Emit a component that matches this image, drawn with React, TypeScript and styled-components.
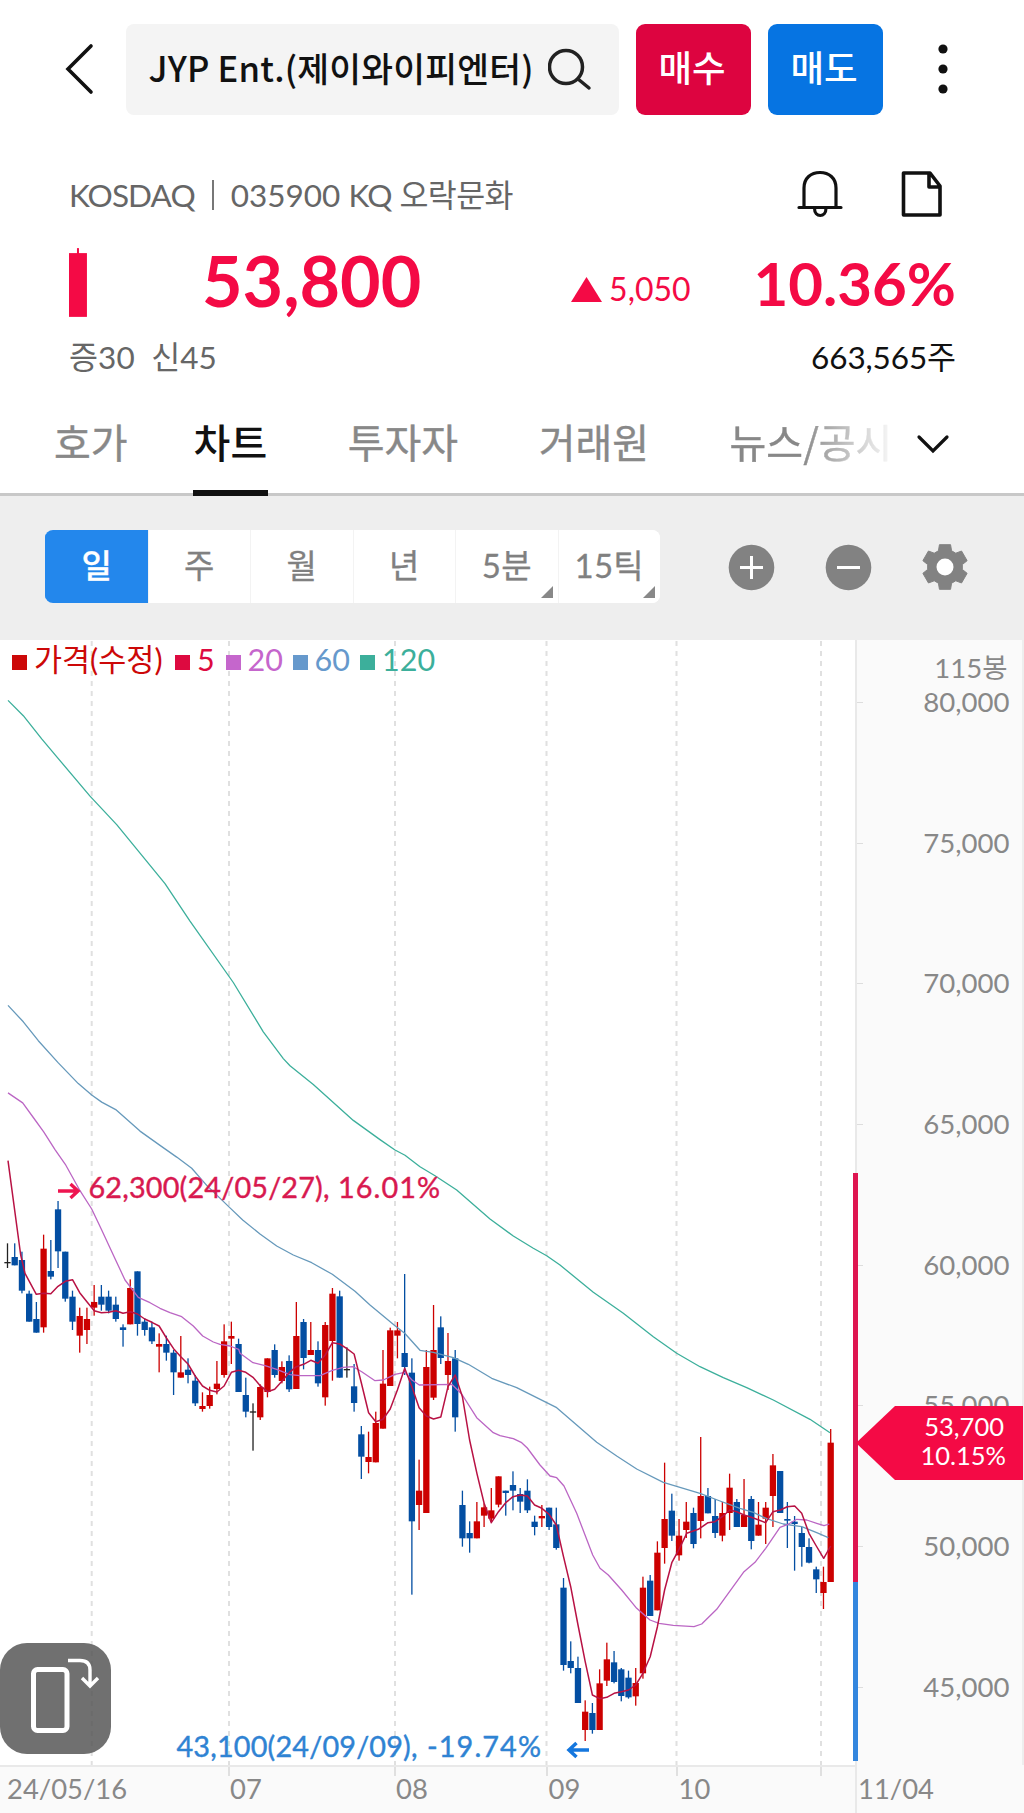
import React from "react";
import styled, { createGlobalStyle } from "styled-components";

const latin = `Lato, "Noto Sans CJK KR", sans-serif`;
const RED = "#f40a45";

const GlobalStyle = createGlobalStyle`
  *, *::before, *::after { box-sizing: border-box; }
  body { margin: 0; background: #fff; }
  button { font: inherit; border: 0; padding: 0; background: none; color: inherit; }
`;

const Screen = styled.main`
  width: 1024px;
  height: 1813px;
  display: flex;
  flex-direction: column;
  overflow: hidden;
  background: #fff;
  color: #111;
  font-family: ${latin};
`;

const TopBar = styled.header`
  height: 138px;
  padding: 23.5px 38px 0 61px;
  display: flex;
  align-items: flex-start;
`;

const IconButton = styled.button<{ $w: number; $h: number }>`
  width: ${(p) => p.$w}px;
  height: ${(p) => p.$h}px;
  display: flex;
  align-items: center;
  justify-content: center;
  flex: none;
`;

const SearchBox = styled.div`
  flex: none;
  width: 493px;
  height: 91px;
  margin: 0 17px 0 28.5px;
  padding: 0 27px 0 23px;
  display: flex;
  align-items: center;
  justify-content: space-between;
  background: #f4f4f4;
  border-radius: 8px;
`;

const StockName = styled.span`
  font: 500 34.6px/48px "Noto Sans CJK KR", sans-serif;
  letter-spacing: 0.2px;
  white-space: nowrap;
  padding-bottom: 5px;
`;

const TradeButton = styled.button<{ $bg: string }>`
  flex: none;
  width: 115px;
  height: 91px;
  margin-right: 17px;
  padding: 0 2px 5px 0;
  border-radius: 9px;
  background: ${(p) => p.$bg};
  color: #fff;
  font: 500 36.5px/50px "Noto Sans CJK KR", sans-serif;
`;

const Summary = styled.section`
  height: 262px;
  padding: 0 68px 0 69px;
  display: flex;
  flex-direction: column;
`;

const Line = styled.div<{ $h: number; $top?: number }>`
  height: ${(p) => p.$h}px;
  padding-top: ${(p) => p.$top ?? 0}px;
  display: flex;
  align-items: center;
  justify-content: space-between;
`;

const Meta = styled.span<{ $color?: string; $spacing?: number }>`
  color: ${(p) => p.$color ?? "#666"};
  font-size: 31.5px;
  line-height: 44px;
  letter-spacing: ${(p) => p.$spacing ?? 0}px;
  white-space: pre;
`;

const MetaRow = styled.div`
  display: flex;
  align-items: center;
  padding-top: 2px;
`;

const Divider = styled.i`
  width: 2px;
  height: 30px;
  margin: 0 17px;
  background: #777;
`;

const IconPair = styled.div`
  display: flex;
  gap: 58px;
  margin-right: 13px;
`;

const PriceRow = styled.div`
  height: 94px;
  display: flex;
  align-items: center;
  color: ${RED};
`;

const Price = styled.strong`
  width: 222px;
  margin-left: 115px;
  padding-bottom: 6px;
  font: 700 70px/80px ${latin};
`;

const Change = styled.span`
  width: 183px;
  margin-left: 148px;
  display: flex;
  align-items: center;
  gap: 7px;
  padding-top: 12px;
  font: 400 32px/40px ${latin};
`;

const Percent = styled.strong`
  flex: 1;
  text-align: right;
  white-space: nowrap;
  font: 700 60px/76px ${latin};
`;

const Tabs = styled.nav`
  height: 96px;
  padding: 0 70px 0 53px;
  display: flex;
  align-items: stretch;
  border-bottom: 3px solid #c8c8c8;
`;

const Tab = styled.button<{ $active?: boolean; $gap: number }>`
  position: relative;
  flex: none;
  height: 96px;
  margin-right: ${(p) => p.$gap}px;
  padding: 0 1px 8px;
  border-bottom: 6px solid ${(p) => (p.$active ? "#111" : "transparent")};
  color: ${(p) => (p.$active ? "#111" : "#888")};
  font: ${(p) => (p.$active ? 500 : 400)} 40px/50px "Noto Sans CJK KR", sans-serif;
  -webkit-text-stroke: ${(p) => (p.$active ? 0 : 0.4)}px;
  white-space: nowrap;
`;

const FadeTab = styled(Tab)`
  width: 170px;
  text-align: left;
  mask-image: linear-gradient(90deg, #000 42%, transparent 99%);
`;

const Toolbar = styled.section`
  height: 144px;
  padding: 34px 55px 0 45px;
  display: flex;
  align-items: flex-start;
  background: #eee;
`;

const Segments = styled.div`
  width: 615px;
  height: 73px;
  display: grid;
  grid-template-columns: repeat(6, 1fr);
  background: #fff;
  border-radius: 8px;
  overflow: hidden;
`;

const Segment = styled.button<{ $active?: boolean; $menu?: boolean }>`
  position: relative;
  padding-bottom: 3px;
  border-left: 1px solid ${(p) => (p.$active ? "#2387ec" : "#f3f3f3")};
  background: ${(p) => (p.$active ? "#2387ec" : "#fff")};
  color: ${(p) => (p.$active ? "#fff" : "#808080")};
  font: ${(p) => (p.$active ? 500 : 400)} 33px/44px ${latin};
  -webkit-text-stroke: 0.3px;
  letter-spacing: 0.3px;
  &::after {
    content: "";
    display: ${(p) => (p.$menu ? "block" : "none")};
    position: absolute;
    right: 5px;
    bottom: 5px;
    border-left: 12px solid transparent;
    border-bottom: 12px solid #888;
  }
`;

const Tools = styled.div`
  flex: 1;
  height: 74px;
  padding-left: 68px;
  display: flex;
  align-items: center;
  justify-content: space-between;
`;

const ChartArea = styled.section`
  position: relative;
  height: 1173px;
  display: grid;
  grid-template-columns: 855px 169px;
  grid-template-rows: 1125px 48px;
`;

const Legend = styled.ul`
  position: absolute;
  left: 12px;
  top: -1px;
  margin: 0;
  padding: 0;
  display: flex;
  list-style: none;
  font: 400 30.5px/40px ${latin};
`;

const LegendItem = styled.li<{ $color: string; $w: number }>`
  width: ${(p) => p.$w}px;
  display: flex;
  align-items: center;
  gap: 7px;
  color: ${(p) => p.$color};
  white-space: nowrap;
  &::before {
    content: "";
    width: 15px;
    height: 15px;
    margin-top: 6px;
    flex: none;
    background: ${(p) => p.$color};
  }
`;

const PriceAxis = styled.div`
  border-left: 2px solid #e9e9e9;
  border-right: 2px solid #eee;
  background: #fafafa;
  color: #888;
  font: 400 27.6px/36px ${latin};
  text-align: right;
  padding: 10px 12.500px 0 0;
  overflow: hidden;
`;

const BarCount = styled.div`
  height: 34px;
  padding-right: 2px;
  font-size: 27.5px;
`;

const AxisPrice = styled.div`
  position: relative;
  height: 140.7px;
  &::before {
    content: "";
    position: absolute;
    left: 0;
    top: 18px;
    width: 6px;
    height: 1px;
    background: #ddd;
  }
`;

const TimeAxis = styled.div`
  grid-column: 1 / -1;
  height: 48px;
  display: flex;
  background: #fafafa;
  color: #888;
  font: 400 27.4px/43px ${latin};
`;

const TimeCell = styled.div<{ $w: number; $tick?: boolean; $indent: number }>`
  width: ${(p) => p.$w}px;
  padding-left: ${(p) => p.$indent}px;
  border-top: 2px solid #e9e9e9;
  background: ${(p) =>
    p.$tick ? "linear-gradient(#e0e0e0, #e0e0e0) 0 0 / 2px 9px no-repeat" : "none"};
  white-space: nowrap;
`;

const LastDate = styled.div`
  flex: 1;
  padding: 2px 0 0 1px;
  border-left: 2px solid #e9e9e9;
`;

const RangeBar = styled.div`
  position: absolute;
  left: 853px;
  top: 533px;
  width: 5px;
  height: 588px;
  background: linear-gradient(#de1550 0 409px, #3386de 409px);
`;

const PriceFlag = styled.div`
  position: absolute;
  left: 856px;
  top: 766px;
  width: 167px;
  height: 74px;
  padding: 6px 17px 0 0;
  background: ${RED};
  clip-path: polygon(0 50%, 39px 0, 100% 0, 100% 100%, 39px 100%);
  color: #fff;
  font: 400 25.5px/29px ${latin};
  text-align: right;
`;

const FlagLine = styled.div<{ $nudge?: number }>`
  padding-right: ${(p) => p.$nudge ?? 0}px;
`;

const RotateButton = styled.button`
  position: absolute;
  left: 0;
  top: 1003px;
  width: 111px;
  height: 111px;
  border-radius: 27px;
  background: rgba(80, 80, 80, 0.82);
`;

/* ---------- chart data ---------- */

type Kind = "R" | "B" | "K";
type Candle = [Kind, number, number, number, number];

/* Each block: vertical origin of the block, then high / body top / body bottom / low in thirds of a pixel. */
const blocks: [number, Candle[]][] = [
  [1140, [
    ["K",310,366,370,384],["B",310,351,376,376],["B",335,360,452,460],["B",452,461,545,545],
    ["B",486,537,578,578],["R",284,326,562,578],["B",300,393,410,418],["B",183,208,334,384],
    ["B",335,335,476,485],["B",452,470,545,570],["R",503,528,587,638],["R",503,537,570,612],
    ["R",435,486,503,527],["B",435,470,494,512],["B",452,470,512,520],["B",470,494,537,545],
    ["B",553,562,570,620],["R",418,444,553,553],["B",394,394,552,587],["B",535,545,570,587],
    ["B",545,562,604,612],["R",580,612,620,697],["B",587,612,638,662],["B",630,638,697,765],
    ["R",588,697,713,713],["B",655,689,705,730],["B",705,722,790,798],["R",757,798,807,815],
    ["R",740,765,798,806],["R",663,731,747,763],["R",553,604,705,713],["R",545,588,596,672],
    ["B",596,612,756,756],
  ]],
  [1220, [
    ["B",473,525,575,592],["K",550,574,578,692],["R",493,501,592,600],["R",415,415,516,532],
    ["B",373,390,465,473],["R",424,441,483,490],["B",406,423,508,516],["R",246,348,507,507],
    ["B",297,306,414,448],["R",306,390,405,405],["B",364,390,490,500],["R",306,315,532,557],
    ["R",204,221,363,482],["B",212,229,473,473],["K",382,447,451,473],["B",432,499,549,575],
    ["B",618,643,710,777],["R",635,711,726,760],["R",575,609,727,727],["R",390,491,626,626],
    ["R",323,331,498,498],["R",306,331,347,415],["B",162,399,441,465],
  ]],
  [1240, [
    ["B",355,398,844,1064],["R",659,752,795,870],["R",330,381,819,819],["R",195,330,473,480],
    ["B",229,262,354,372],["R",279,363,405,450],["B",330,355,532,575],["B",752,795,895,920],
    ["B",844,879,895,938],["R",786,844,895,895],["R",790,802,827,861],["R",744,811,836,845],
    ["R",709,709,794,802],["B",752,752,759,827],["B",694,735,752,811],["B",744,762,785,819],
    ["B",718,752,811,819],["B",827,845,861,886],["R",795,828,835,861],["B",803,803,861,870],
    ["B",803,853,924,929],
  ]],
  [1440, [
    ["B",414,443,675,692],["B",604,663,684,700],["B",650,684,789,789],["R",781,815,870,903],
    ["B",789,819,870,881],["R",688,730,870,870],["R",608,658,722,738],["B",633,667,726,730],
    ["B",684,688,768,784],["B",692,713,772,776],["R",684,729,769,797],["R",410,443,700,716],
    ["B",405,422,528,528],["R",304,338,511,511],["R",68,237,324,371],["B",161,212,287,303],
    ["R",237,287,346,362],
  ]],
  [1400, [
    ["R",306,365,390,414],["B",323,339,432,445],["R",111,288,363,415],["B",264,288,340,340],
    ["B",297,348,399,414],["R",306,339,407,424],["R",221,263,339,390],["B",297,306,381,381],
    ["R",237,345,381,381],["B",288,297,423,448],["R",306,374,407,407],["R",306,323,356,432],
    ["R",162,196,288,381],["B",213,213,339,339],["B",306,357,362,444],["B",348,365,372,512],
    ["B",381,399,441,500],["B",415,441,488,490],["B",500,508,538,579],["R",500,546,579,627],
    ["R",87,128,546,546],
  ]],
];

const TOP = 640;
const STEP = 7.221;
const candles = blocks.flatMap(([oy, rows]) =>
  rows.map(([kind, ...v]) => ({ kind, v: v.map((n) => oy - TOP + n / 3) }))
);
const candleColor: Record<Kind, string> = { R: "#cc0000", B: "#034ea2", K: "#222" };

/* Line segments: origin x, origin y, points in thirds of a pixel, and an optional vertical scale. */
type Part = [number, number, number[], number?];
const toPoints = (parts: Part[]) =>
  parts
    .flatMap(([ox, oy, p, scale = 3]) => {
      const out: string[] = [];
      for (let i = 0; i < p.length; i += 2)
        out.push(`${(ox + p[i] / 3).toFixed(1)},${(oy - TOP + p[i + 1] / scale).toFixed(1)}`);
      return out;
    })
    .join(" ");

const series = (start: number, ys: number[]): number[] =>
  ys.flatMap((y, i) => [(7.5 + (start + i) * STEP) * 3, y]);

const ma5 = toPoints([
  [0, 1140, [24,62,62,345,75,400,109,463]],
  [0, 1140, series(5, [460,461,439,424,419,458,485,512,518,517,512,520,515,522,537,547,558,594,626,650,672,708,738,751,756,738,697,691,697,712])],
  [0, 1220, series(35, [497,515,508,484,458,440,433,421,430,405,368,372,386,402,488,578,605,598,567,510,445,500,563,588,597,591,500])],
  [0, 1240, series(62, [405,470,600,700,790,848,815,788,770,765,768,795,805,823,855])],
  [0, 1440, series(77, [350,440,555,665,765,776,772,760,755,750,735,700,650,560,450,368])],
  [620, 1400, [177,448,200,400,235,388,264,368,285,365,307,350,329,330,350,335,372,345,394,352,416,360,437,368,459,335,481,330,502,320,524,318,545,340,567,400,589,438,611,475,632,438]],
]);
const ma20 = toPoints([
  [0, 680, [24,1156,68,1184,100,1225,131,1265,165,1315,196,1356,240,1430], 2.8],
  [0, 1140, [275,207,305,270,340,345,375,420,415,472,450,488,480,505,510,518,545,530,580,558,608,588,640,606,660,613,690,618,716,628]],
  [240, 1220, [0,400,39,428,75,437,110,448,150,464,180,467,240,467,277,451,310,442,340,440,365,455,405,482,430,480,465,463,494,457,516,480,538,495,635,493]],
  [380, 1240, [245,462,290,533,340,578,360,587,400,596,425,608,442,624,480,675,510,708,530,713,552,738,590,820]],
  [540, 1440, [158,345,180,385,205,405,245,450,290,505,330,540,357,550,400,556,462,560,485,552]],
  [620, 1400, [290,628,372,515,405,487,437,445,480,382,502,374,530,358,560,360,590,370,612,377,628,372]],
]);
const ma60 = toPoints([
  [0, 680, [24,911,70,957,115,1010,175,1072,235,1130,275,1162,305,1182,347,1203,420,1263,480,1303,530,1336,575,1367,620,1415,690,1478], 2.8],
  [240, 1220, [8,0,60,42,110,78,160,105,215,128,277,163,345,214,390,255,465,317,494,340,540,391,580,397,640,413]],
  [380, 1150, [265,643,335,685,410,713,470,743,530,773,590,825,650,877,710,918,770,957,850,997]],
  [620, 1400, [240,280,300,303,360,325,400,337,440,356,490,372,545,380,590,398,625,413]],
]);
const ma120 = toPoints([
  [0, 680, [24,57,70,100,125,165,175,220,270,325,350,405,495,570,570,675,700,847,790,985,850,1060,870,1080,940,1133,1060,1233,1140,1287], 2.8],
  [380, 1150, [45,0,75,16,120,50,165,77,230,120,330,207,400,258,460,295,500,317,540,345,640,427,730,490,820,560,890,610,960,650,1030,683,1100,713,1180,750,1290,808,1350,848]],
]);

const gridX = [91.7, 229, 395, 546.5, 676.5, 821];

const AnnotationText = styled.text`
  font: 400 28.8px ${latin};
  word-spacing: -1px;
  stroke-width: 0.4px;
`;

function Chart() {
  return (
    <svg width="855" height="1125" viewBox="0 0 855 1125">
      {gridX.map((x) => (
        <line key={x} x1={x} x2={x} y1={1} y2={1126} stroke="#e0e0e0" strokeWidth="2" strokeDasharray="5 5" />
      ))}
      {candles.map(({ kind, v: [hi, top, bottom, lo] }, i) => {
        const x = 7.5 + i * STEP;
        return (
          <g key={i} fill={candleColor[kind]}>
            <rect x={x - 0.65} y={hi} width={1.3} height={lo - hi} />
            <rect x={x - 3.15} y={top} width={6.3} height={Math.max(bottom - top, 1.2)} />
          </g>
        );
      })}
      <g fill="none" strokeWidth="1.3" strokeLinejoin="round">
        <polyline points={ma120} stroke="#3caf9b" />
        <polyline points={ma60} stroke="#6699bb" />
        <polyline points={ma20} stroke="#bb66c4" />
        <polyline points={ma5} stroke="#b81244" strokeWidth="1.5" />
      </g>
      <AnnotationText x="88.500" y="558" fill="#d8194f" stroke="#d8194f">
        <tspan textLength="241">62,300(24/05/27),</tspan>
        <tspan x="338" textLength="102">16.01%</tspan>
      </AnnotationText>
      <path d="M58 551H78M70.500 544L78 551L70.500 558" fill="none" stroke="#ee1550" strokeWidth="3.400" />
      <AnnotationText x="176.500" y="1117" fill="#2f83d3" stroke="#2f83d3">
        <tspan textLength="241">43,100(24/09/09),</tspan>
        <tspan x="427" textLength="114">-19.74%</tspan>
      </AnnotationText>
      <path d="M589 1110H569M576.500 1103L569 1110L576.500 1117" fill="none" stroke="#1577de" strokeWidth="3.500" />
    </svg>
  );
}

const tabs = [
  { label: "호가", gap: 64 },
  { label: "차트", gap: 78.5, active: true },
  { label: "투자자", gap: 78.5 },
  { label: "거래원", gap: 78.5 },
];

const periods = [
  { label: "일", active: true },
  { label: "주" },
  { label: "월" },
  { label: "년" },
  { label: "5분", menu: true },
  { label: "15틱", menu: true },
];

const legend = [
  { label: "가격(수정)", color: "#cc0808", w: 163 },
  { label: "5", color: "#dd0a40", w: 50.5 },
  { label: "20", color: "#c566cc", w: 67 },
  { label: "60", color: "#6699cc", w: 67.5 },
  { label: "120", color: "#3caf9b", w: 90 },
];

const prices = ["80,000", "75,000", "70,000", "65,000", "60,000", "55,000", "50,000", "45,000"];

const times = [
  { label: "24/05/16", w: 228, indent: 7 },
  { label: "07", w: 166, indent: 2, tick: true },
  { label: "08", w: 151.5, indent: 2, tick: true },
  { label: "09", w: 130, indent: 3, tick: true },
  { label: "10", w: 144.5, indent: 3, tick: true },
  { label: "", w: 35, indent: 0, tick: true },
];

const gearPath = Array.from({ length: 6 }, (_, i) => {
  const at = (deg: number, r: number) => {
    const a = ((i * 60 + deg - 90) * Math.PI) / 180;
    return `${(24 + r * Math.cos(a)).toFixed(2)} ${(24 + r * Math.sin(a)).toFixed(2)}`;
  };
  return `${i ? "L" : "M"}${at(-22, 17.5)}L${at(-14, 23)}L${at(14, 23)}L${at(22, 17.5)}`;
}).join("") + "Z";

export default function App() {
  return (
    <Screen>
      <GlobalStyle />
      <TopBar>
        <IconButton $w={36} $h={91} aria-label="뒤로">
          <svg width="36" height="52" viewBox="0 0 36 52" fill="none" stroke="#111" strokeWidth="3.6" strokeLinecap="round">
            <path d="M30 3L7 26L30 49" />
          </svg>
        </IconButton>
        <SearchBox>
          <StockName>JYP Ent.(제이와이피엔터)</StockName>
          <svg width="44" height="44" viewBox="0 0 44 44" fill="none" stroke="#222" strokeWidth="3.5" strokeLinecap="round">
            <circle cx="18" cy="20" r="16.500" />
            <path d="M30 32L41 41" />
          </svg>
        </SearchBox>
        <TradeButton $bg="#dd0440">매수</TradeButton>
        <TradeButton $bg="#0674e2">매도</TradeButton>
        <IconButton $w={86} $h={91} aria-label="메뉴">
          <svg width="12" height="52" viewBox="0 0 12 52" fill="#111">
            <circle cx="6" cy="6" r="4.600" />
            <circle cx="6" cy="26" r="4.600" />
            <circle cx="6" cy="46" r="4.600" />
          </svg>
        </IconButton>
      </TopBar>

      <Summary>
        <Line $h={98} $top={14}>
          <MetaRow>
            <Meta $spacing={-0.9}>KOSDAQ</Meta>
            <Divider />
            <Meta>035900 </Meta>
            <Meta $spacing={-0.6}>KQ 오락문화</Meta>
          </MetaRow>
          <IconPair>
            <svg width="46" height="50" viewBox="0 0 46 50" fill="none" stroke="#111" strokeWidth="3.200" strokeLinecap="round">
              <path d="M2 38.500H44M7 38V19C7 9 14 3.500 23 3.500S39 9 39 19V38M17.500 39C17.500 49 29 49 29 39" />
            </svg>
            <svg width="42" height="50" viewBox="0 0 42 50" fill="none" stroke="#111" strokeWidth="3.600" strokeLinejoin="round">
              <path d="M2.500 4H29L39 17V46H2.500ZM28 4V18H39" />
            </svg>
          </IconPair>
        </Line>
        <PriceRow>
          <svg width="18" height="70" viewBox="0 0 18 70" fill={RED}>
            <rect x="8" y="0" width="2" height="8" />
            <rect x="0" y="5" width="18" height="64" />
          </svg>
          <Price>53,800</Price>
          <Change>
            <svg width="31" height="25" viewBox="0 0 31 25" fill={RED}>
              <path d="M15.500 0L31 25H0Z" />
            </svg>
            5,050
          </Change>
          <Percent>10.36%</Percent>
        </PriceRow>
        <Line $h={52} $top={2}>
          <Meta $spacing={0.1}>증30  신45</Meta>
          <Meta $color="#111" $spacing={-0.1}>663,565주</Meta>
        </Line>
      </Summary>

      <Tabs>
        {tabs.map((t) => (
          <Tab key={t.label} $active={t.active} $gap={t.gap}>{t.label}</Tab>
        ))}
        <FadeTab $gap={17.5}>뉴스/공시</FadeTab>
        <IconButton $w={34} $h={88} aria-label="더보기">
          <svg width="34" height="22" viewBox="0 0 34 22" fill="none" stroke="#111" strokeWidth="3.200" strokeLinecap="round">
            <path d="M3 4L17 18L31 4" />
          </svg>
        </IconButton>
      </Tabs>

      <Toolbar>
        <Segments>
          {periods.map((p) => (
            <Segment key={p.label} $active={p.active} $menu={p.menu}>{p.label}</Segment>
          ))}
        </Segments>
        <Tools>
          {["M12 23.500H35M23.500 12V35", "M12 23.500H35"].map((d) => (
            <svg key={d} width="47" height="47" viewBox="0 0 47 47">
              <circle cx="23.500" cy="23.500" r="22.800" fill="#828282" />
              <path d={d} stroke="#fff" strokeWidth="3" />
            </svg>
          ))}
          <svg width="48" height="48" viewBox="0 0 48 48">
            <path d={gearPath} fill="#828282" stroke="#828282" strokeWidth="1" strokeLinejoin="round" />
            <circle cx="24" cy="24" r="8.500" fill="#fff" />
          </svg>
        </Tools>
      </Toolbar>

      <ChartArea>
        <Chart />
        <PriceAxis>
          <BarCount>115봉</BarCount>
          {prices.map((p) => (
            <AxisPrice key={p}>{p}</AxisPrice>
          ))}
        </PriceAxis>
        <TimeAxis>
          {times.map((t) => (
            <TimeCell key={t.label} $w={t.w} $indent={t.indent} $tick={t.tick}>{t.label}</TimeCell>
          ))}
          <LastDate>11/04</LastDate>
        </TimeAxis>
        <Legend>
          {legend.map((l) => (
            <LegendItem key={l.label} $color={l.color} $w={l.w}>{l.label}</LegendItem>
          ))}
        </Legend>
        <RangeBar />
        <PriceFlag>
          <FlagLine $nudge={2}>53,700</FlagLine>
          <FlagLine>10.15%</FlagLine>
        </PriceFlag>
        <RotateButton aria-label="화면 회전">
          <svg width="111" height="111" viewBox="0 0 111 111" fill="none" stroke="#fff">
            <rect x="33.500" y="26.500" width="33.500" height="61" rx="4" strokeWidth="5" />
            <path d="M68 17.500H80Q90 17.500 90 27V42M82 35L90 43L98 35" strokeWidth="3.400" />
          </svg>
        </RotateButton>
      </ChartArea>
    </Screen>
  );
}
